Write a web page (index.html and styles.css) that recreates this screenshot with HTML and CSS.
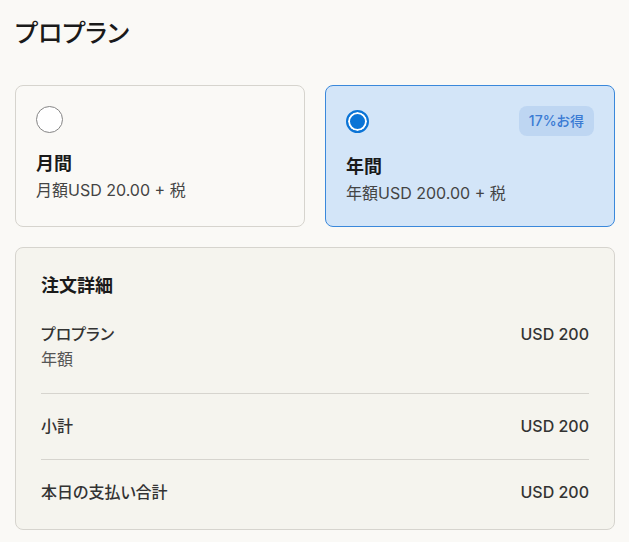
FILE: index.html
```html
<!DOCTYPE html>
<html lang="ja">
  <head>
    <meta charset="UTF-8" />
    <meta name="viewport" content="width=device-width, initial-scale=1.0" />
    <title>プロプラン</title>

    <link rel="stylesheet" href="styles.css">
  </head>
  <body>
    <main class="page">
      <h1 class="title">プロプラン</h1>

      <div class="plans">
        <label class="plan">
          <div class="plan-head">
            <span class="radio"></span>
          </div>
          <p class="plan-name">月間</p>
          <p class="plan-price">月額USD 20.00 + 税</p>
        </label>

        <label class="plan selected">
          <div class="plan-head">
            <span class="radio"></span>
            <span class="badge">17%お得</span>
          </div>
          <p class="plan-name">年間</p>
          <p class="plan-price">年額USD 200.00 + 税</p>
        </label>
      </div>

      <section class="order">
        <h2 class="order-title">注文詳細</h2>

        <div class="row first">
          <div>
            <p class="row-label">プロプラン</p>
            <p class="row-sub">年額</p>
          </div>
          <p class="row-value">USD 200</p>
        </div>

        <div class="row">
          <p class="row-label">小計</p>
          <p class="row-value">USD 200</p>
        </div>

        <div class="row last">
          <p class="row-label">本日の支払い合計</p>
          <p class="row-value">USD 200</p>
        </div>
      </section>
    </main>
  </body>
</html>
```

FILE: styles.css
```css
body {
  margin: 0;
  background: #faf9f6;
  font-family: Inter, "Noto Sans CJK JP", sans-serif;
  font-feature-settings: "palt";
  color: #1a1a1a;
}

p {
  margin: 0;
}

.page {
  width: 600px;
  padding: 14px 0 0 15px;
}

.title {
  margin: 0 0 33px;
  font-size: 25px;
  line-height: 38px;
  font-weight: 500;
}

.plans {
  display: grid;
  grid-template-columns: 1fr 1fr;
  gap: 20px;
}

.plan {
  display: block;
  padding: 20px 20px 22px;
  border: 1px solid #d6d4ce;
  border-radius: 8px;
  background: #faf9f6;
  cursor: pointer;
}

.plan.selected {
  border-color: #3a88db;
  background: #d3e5f8;
}

.plan-head {
  display: flex;
  align-items: center;
  justify-content: space-between;
}

.radio {
  width: 25px;
  height: 25px;
  border: 1px solid #858585;
  border-radius: 50%;
  background: #fff;
  box-sizing: content-box;
}

.selected .radio {
  width: 19px;
  height: 19px;
  border: 2px solid #0b74d6;
  background: #0b74d6;
  box-shadow: inset 0 0 0 2px #fff;
}

.badge {
  padding: 6px 10px;
  border-radius: 8px;
  background: #bed6f2;
  color: #3a7bd4;
  font-size: 14px;
  line-height: 18px;
  font-weight: 500;
}

.plan-name {
  margin-top: 18px;
  font-size: 18px;
  line-height: 26px;
  font-weight: 700;
}

.plan-price {
  margin-top: 2px;
  font-size: 16px;
  line-height: 22px;
  color: #444;
}

.order {
  margin-top: 20px;
  padding: 25px;
  border: 1px solid #d6d4ce;
  border-radius: 8px;
  background: #f5f4ee;
}

.order-title {
  margin: 0;
  font-size: 18px;
  line-height: 26px;
  font-weight: 700;
}

.row {
  display: flex;
  justify-content: space-between;
  align-items: flex-start;
  padding: 20px 0 21px;
  border-top: 1px solid #d6d4ce;
  font-size: 16px;
  line-height: 24px;
  font-weight: 500;
  color: #333;
}

.row.first {
  padding: 23px 0 22px;
  border-top: none;
}

.row.last {
  padding-bottom: 0;
}

.row-sub {
  margin-top: 1px;
  font-size: 16px;
  font-weight: 400;
  color: #555;
}

.row-value {
  color: #333;
}
```
